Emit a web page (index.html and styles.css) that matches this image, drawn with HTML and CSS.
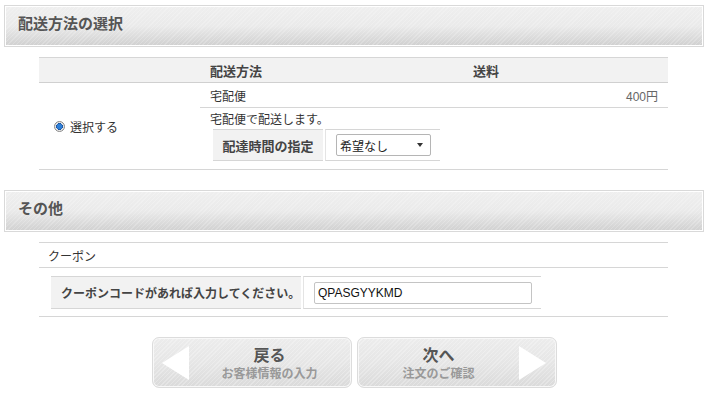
FILE: index.html
```html
<!DOCTYPE html>
<html lang="ja">
<head>
    <meta charset="UTF-8">
    <title>配送方法の選択</title>
    <link rel="stylesheet" href="styles.css">
</head>
<body>
    <div class="section-head"><h2>配送方法の選択</h2></div>
    <table class="list delivery">
        <colgroup>
            <col class="c-radio">
            <col class="c-name">
            <col>
        </colgroup>
        <thead>
            <tr>
                <th></th>
                <th class="left">配送方法</th>
                <th>送料</th>
            </tr>
        </thead>
        <tbody>
            <tr class="ruled">
                <td rowspan="2" class="radio-cell">
                    <label class="radio"><input type="radio" name="deliv" checked> 選択する</label>
                </td>
                <td>宅配便</td>
                <td class="price">400円</td>
            </tr>
            <tr>
                <td colspan="2" class="detail">
                    <p>宅配便で配送します。</p>
                    <table class="form time">
                        <tr>
                            <th>配達時間の指定</th>
                            <td>
                                <span class="select">
                                    <select>
                                        <option>希望なし</option>
                                        <option>午前中</option>
                                        <option>14時～16時</option>
                                    </select>
                                </span>
                            </td>
                        </tr>
                    </table>
                </td>
            </tr>
        </tbody>
    </table>

    <div class="section-head next"><h2>その他</h2></div>
    <table class="list coupon">
        <tr class="ruled">
            <td class="label">クーポン</td>
        </tr>
        <tr>
            <td class="detail">
                <table class="form code">
                    <tr>
                        <th>クーポンコードがあれば入力してください。</th>
                        <td><input type="text" value="QPASGYYKMD"></td>
                    </tr>
                </table>
            </td>
        </tr>
    </table>

    <div class="buttons">
        <a href="#" class="btn back">
            <span class="arrow"></span>
            <strong>戻る</strong>
            <small>お客様情報の入力</small>
        </a>
        <a href="#" class="btn forward">
            <strong>次へ</strong>
            <small>注文のご確認</small>
            <span class="arrow"></span>
        </a>
    </div>
</body>
</html>
```

FILE: styles.css
```css
body {
    margin: 0;
    padding: 5px 7px 0 4px;
    font-family: "Liberation Sans", "Noto Sans CJK JP", sans-serif;
    font-size: 12px;
    color: #333;
    background: #fff;
}

.section-head {
    width: 698px;
    height: 40px;
    border: 1px solid #d9d9d9;
    box-shadow: inset 0 0 0 1px #fff;
    background:
        repeating-linear-gradient(-45deg, rgba(255, 255, 255, 0.2) 0 1px, transparent 1px 3px),
        linear-gradient(#efefef 0%, #eaeaea 50%, #d0d0d0 100%);
}

.section-head.next {
    margin-top: 20px;
}

.section-head h2 {
    margin: 0;
    padding-left: 13px;
    font-size: 15px;
    line-height: 36px;
    color: #555;
}

.list {
    width: 629px;
    margin: 10px 0 0 35px;
    border-collapse: collapse;
    border-top: 1px solid #d6d6d6;
    border-bottom: 1px solid #d6d6d6;
}

.list td,
.list th {
    padding: 0;
}

.c-radio {
    width: 161px;
}

.c-name {
    width: 104px;
}

.delivery thead th {
    height: 24px;
    background: #f2f2f2;
    border-bottom: 1px solid #d0d0d0;
    font-size: 13px;
    color: #444;
}

.delivery thead th.left {
    text-align: left;
    padding-left: 10px;
}

.ruled td {
    height: 24px;
    border-bottom: 1px solid #d6d6d6;
    padding-left: 10px;
}

.ruled td.radio-cell {
    border-bottom: none;
    padding-left: 15px;
}

.ruled td.price {
    text-align: right;
    padding-right: 10px;
    color: #666;
}

.radio {
    display: flex;
    align-items: center;
    gap: 5px;
}

.radio input {
    appearance: none;
    margin: 0;
    width: 11px;
    height: 11px;
    border-radius: 50%;
    border: 1px solid #8a8a8a;
    background: radial-gradient(circle, #2f7fd6 0 2.5px, #1b4f9a 3.2px, #e8e8e8 3.6px);
}

.list td.detail {
    padding: 4px 0 8px 10px;
    vertical-align: top;
}

.detail p {
    margin: 0;
    line-height: 16px;
}

.form {
    border-collapse: separate;
    border-spacing: 2px 0;
}

.form th,
.form td {
    border-top: 1px solid #d6d6d6;
    border-bottom: 1px solid #d6d6d6;
}

.form th {
    background: #f2f2f2;
    color: #444;
    font-size: 13px;
}

.form td {
    border-left: 1px solid #e4e4e4;
    padding-left: 10px;
}

.time {
    margin: 1px 0 0 1px;
}

.time th {
    width: 110px;
    height: 30px;
}

.time td {
    width: 104px;
}

.select {
    position: relative;
    display: inline-block;
}

.select select {
    appearance: none;
    display: block;
    width: 95px;
    height: 22px;
    padding: 0 0 0 3px;
    border: 1px solid #b5b5b5;
    border-radius: 2px;
    background: #fff;
    font-family: "Noto Sans CJK JP", sans-serif;
    font-size: 12px;
    color: #222;
}

.select::after {
    content: "";
    position: absolute;
    right: 8px;
    top: 9px;
    border-left: 3.5px solid transparent;
    border-right: 3.5px solid transparent;
    border-top: 4px solid #333;
    pointer-events: none;
}

.coupon .ruled td {
    padding-left: 9px;
}

.coupon td.detail {
    padding: 8px 0 7px 10px;
}

.code th {
    width: 240px;
    height: 31px;
    text-align: left;
    padding-left: 10px;
    font-size: 12px;
}

.code td {
    width: 227px;
}

.code input {
    display: block;
    box-sizing: border-box;
    width: 218px;
    height: 22px;
    padding: 0 3px;
    border: 1px solid #c4c4c4;
    border-radius: 2px;
    font-family: "Liberation Sans", sans-serif;
    font-size: 12px;
    color: #111;
}

.buttons {
    display: flex;
    justify-content: center;
    gap: 5px;
    margin-top: 20px;
}

.btn {
    position: relative;
    display: flex;
    flex-direction: column;
    align-items: center;
    justify-content: center;
    box-sizing: border-box;
    width: 200px;
    height: 51px;
    border: 1px solid #dcdcdc;
    border-radius: 7px;
    box-shadow: inset 0 0 0 1px #f8f8f8;
    background:
        repeating-linear-gradient(-45deg, rgba(255, 255, 255, 0.25) 0 1px, transparent 1px 3px),
        linear-gradient(#ececec 0%, #e6e6e6 50%, #dadada 100%);
    text-decoration: none;
}

.btn strong {
    font-family: "Noto Sans CJK JP", sans-serif;
    font-size: 16px;
    line-height: 20px;
    color: #555;
}

.btn small {
    font-family: "Noto Sans CJK JP", sans-serif;
    font-size: 12px;
    font-weight: bold;
    line-height: 18px;
    color: #999;
}

.btn.back strong,
.btn.back small {
    margin-left: 36px;
}

.btn.forward strong,
.btn.forward small {
    margin-right: 36px;
}

.arrow {
    position: absolute;
    top: 8px;
    width: 0;
    height: 0;
    border-top: 17px solid transparent;
    border-bottom: 17px solid transparent;
}

.back .arrow {
    left: 9px;
    border-right: 27px solid #fff;
}

.forward .arrow {
    right: 10px;
    border-left: 27px solid #fff;
}
```
